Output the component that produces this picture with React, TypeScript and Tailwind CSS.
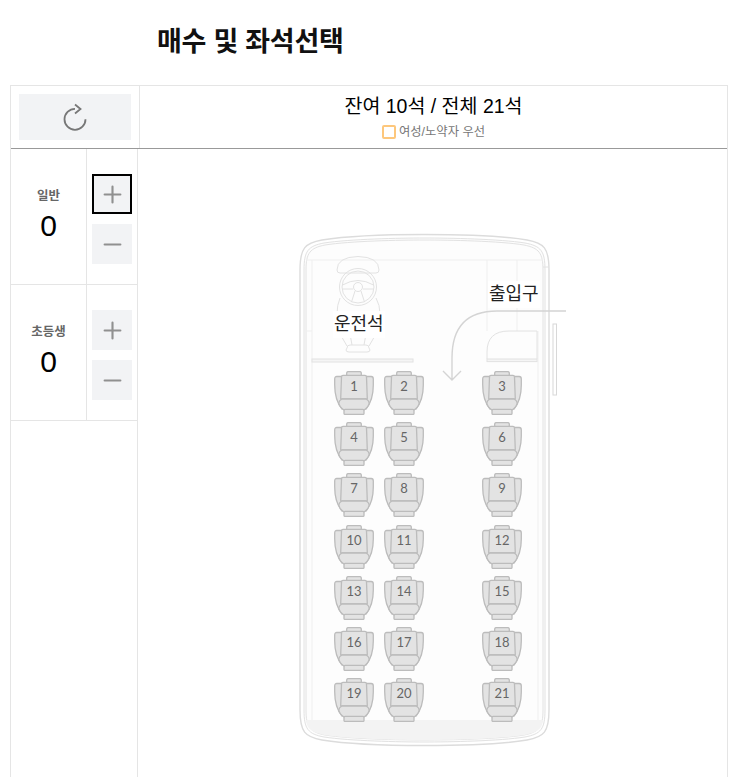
import { Plus, Minus } from 'lucide-react';

const seats = [
  ['1', '2', '3'],
  ['4', '5', '6'],
  ['7', '8', '9'],
  ['10', '11', '12'],
  ['13', '14', '15'],
  ['16', '17', '18'],
  ['19', '20', '21'],
];

function Seat({ label }: { label: string }) {
  return (
    <div className="relative h-[44px] w-[40px]">
      <svg viewBox="0 0 40 44" className="absolute inset-0 h-full w-full" fill="#e3e3e3" stroke="#bcbcbc" strokeWidth="1.3">
        <rect x="12.7" y="0.6" width="14.6" height="5" rx="1.5" />
        <path d="M7 5.5 H2.8 Q0.7 5.5 0.7 8 V14 C0.7 24 3 32 8 38 L12 38 V8 Z" />
        <path d="M33 5.5 H37.2 Q39.3 5.5 39.3 8 V14 C39.3 24 37 32 32 38 L28 38 V8 Z" />
        <path d="M7.5 6 Q7.5 4.4 9 4.4 H31 Q32.5 4.4 32.5 6 L33.3 28 H6.7 Z" />
        <path d="M8 28 H32 Q35 29.5 35.2 32 Q34.5 36 30 39 H10 Q5.5 36 4.8 32 Q5 29.5 8 28 Z" />
        <rect x="10" y="38.4" width="20" height="5" rx="1" />
      </svg>
      <span className="absolute inset-x-0 top-[6px] text-center font-['Lato',sans-serif] text-[13px] leading-[18px] text-[#666]">{label}</span>
    </div>
  );
}

function Counter({ label, active }: { label: string; active?: boolean }) {
  return (
    <div className="flex h-[136px] border-b border-[#e5e5e5]">
      <div className="flex w-[76px] flex-col items-center border-r border-[#e5e5e5] pt-[38px]">
        <span className="text-[12.5px] leading-[18px] font-bold text-[#666]">{label}</span>
        <span className="mt-[3px] text-[30px] leading-[36px] text-black">0</span>
      </div>
      <div className="flex flex-1 flex-col gap-[10px] pt-[25px] pl-[5px]">
        <button className={`flex h-[40px] w-[40px] items-center justify-center bg-[#f2f3f5] text-[#909090] ${active ? 'outline-2 -outline-offset-2 outline-black' : ''}`}>
          <Plus size={27} strokeWidth={1.9} />
        </button>
        <button className="flex h-[40px] w-[40px] items-center justify-center bg-[#f2f3f5] text-[#909090]">
          <Minus size={27} strokeWidth={1.9} />
        </button>
      </div>
    </div>
  );
}

function Bus() {
  return (
    <svg viewBox="298 233 270 515" className="absolute inset-0 h-full w-full" fill="none" stroke="#e2e2e2" strokeWidth="1">
      {/* body */}
      <path d="M300 270 C300 248 305 243 322 240 C350 235.5 400 234.5 424 234.5 C450 234.5 500 235.5 527 240 C544 243 549 248 549 270 V710 C549 732 544 737 527 740 C500 744.5 450 745.5 424 745.5 C400 745.5 350 744.5 322 740 C305 737 300 732 300 710 Z" stroke="#dcdcdc" strokeWidth="1.4" fill="#fff" />
      <path d="M304 270 C304 251 308 246 324 243 C350 239 400 238 424 238 C450 238 500 239 525 243 C541 246 545 251 545 270 V710 C545 729 541 734 525 737 C500 741 450 742 424 742 C400 742 350 741 324 737 C308 734 304 729 304 710 Z" fill="#fdfdfd" />
      <path d="M306 270 C306 253 310 248 325 245 C350 241 400 240 424 240 C450 240 500 241 524 245 C539 248 543 253 543 270 V710 C543 727 539 732 524 735 C500 739 450 740 424 740 C400 740 350 739 325 735 C310 732 306 727 306 710 Z" />
      {/* floor band */}
      <path d="M306 720 H543 C542 729 538 732 524 735 C500 739 450 740 424 740 C400 740 350 739 325 735 C311 732 307 729 306 720 Z" fill="#f3f3f3" stroke="none" />
      {/* interior lines */}
      <path d="M306 260 H543 M312 260 V720 M487 260 V331 M517 260 V331 M538 331 V720 M306 331 H312" stroke="#efefef" />
      <path d="M543 267 H549" />
      {/* door */}
      <rect x="553" y="324" width="3.5" height="71" stroke="#d8d8d8" fill="#fff" />
      <path d="M487 359 V352 Q487 331 509 331 H537 V359" />
      <rect x="487" y="359" width="50" height="2.6" fill="#f5f5f5" />
      <rect x="312" y="359" width="101" height="3" fill="#f5f5f5" />
      {/* arrow */}
      <path d="M566 311 H497 Q452 311 452 358 V380 M443 371 L452 380 L461 371" stroke="#d4d4d4" strokeWidth="1.4" />
      {/* driver */}
      <path d="M337 270 Q337 257 358 256.5 Q379 257 379 270 Q379 273 376 273 H340 Q337 273 337 270 Z" />
      <circle cx="358" cy="287" r="18.5" />
      <circle cx="358" cy="287" r="16" />
      <circle cx="358" cy="287" r="4.5" />
      <path d="M342.5 285 Q358 276 373.5 285 M342.5 289 L353 289 M363 289 L373.5 289 M355 291 L351.5 302 M361 291 L364.5 302" />
      <path d="M340 298 Q337 305 337 314 M376 298 Q380 305 380 314" />
      <path d="M340 334 L347 346 M376 334 L369 346 M350 334 L352 345 M366 334 L364 345" />
      <path d="M347 348 Q347 345 350 345 H366 Q369 345 369 348 L370 350 Q370 352 367 352 H349 Q346 352 346 350 Z" />
    </svg>
  );
}

export default function App() {
  return (
    <div className="h-[777px] overflow-hidden bg-white font-['Liberation_Sans','Noto_Sans_CJK_KR',sans-serif]">
      <h1 className="h-[85px] pt-[22px] pl-[157px] text-[27px] leading-[40px] font-bold tracking-[-0.25px] text-[#111]">매수 및 좌석선택</h1>
      <div className="mr-[3px] ml-[10px] h-[692px] border-x border-t border-[#e5e5e5]">
        {/* header row */}
        <div className="flex h-[63px] border-b border-[#999]">
          <div className="w-[129px] border-r border-[#e5e5e5] pt-[8px] pr-[8px] pl-[8px]">
            <button className="flex h-[46px] w-full items-center justify-center bg-[#f2f3f5] text-[#777]">
              <svg width="24" height="28" viewBox="0 0 24 28" fill="none" stroke="currentColor" strokeWidth="1.8">
                <path d="M12 5.8 A10.5 10.5 0 1 0 22.5 16.3" />
                <path d="M12 1.5 L17.5 6 L12 10.5" />
              </svg>
            </button>
          </div>
          <div className="flex flex-1 flex-col items-center pt-[6px]">
            <p className="text-[19.5px] leading-[29px] text-black">잔여 10석 / 전체 21석</p>
            <p className="mt-[2px] flex items-center gap-[3px] text-[12.3px] leading-[18px] text-[#777]">
              <span className="h-[14px] w-[14px] rounded-[2px] border-2 border-[#fdc77c]" />
              여성/노약자 우선
            </p>
          </div>
        </div>
        <div className="flex">
          <div className="h-[630px] w-[127px] border-r border-[#e5e5e5]">
            <Counter label="일반" active />
            <Counter label="초등생" />
          </div>
          {/* bus layout */}
          <div className="flex-1 pt-[84px] pl-[160px]">
            <div className="relative h-[515px] w-[270px]">
              <Bus />
              <span className="absolute top-[78px] left-[35px] bg-white px-[1px] text-[18px] leading-[27px] text-[#222]">운전석</span>
              <span className="absolute top-[48px] left-[190px] bg-white px-[1px] text-[18px] leading-[27px] text-[#222]">출입구</span>
              <div className="absolute top-[138px] left-[36px] grid grid-cols-[40px_40px_40px] gap-x-[10px] gap-y-[7.2px]">
                {seats.map((row) => (
                  <div key={row[0]} className="col-span-3 grid grid-cols-[40px_40px_40px] gap-x-[10px]">
                    <Seat label={row[0]} />
                    <Seat label={row[1]} />
                    <div className="ml-[48px]">
                      <Seat label={row[2]} />
                    </div>
                  </div>
                ))}
              </div>
            </div>
          </div>
        </div>
      </div>
    </div>
  );
}
